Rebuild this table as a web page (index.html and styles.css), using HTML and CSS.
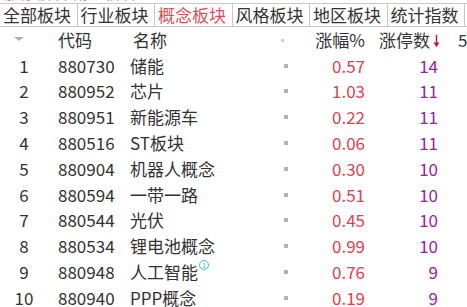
FILE: index.html
```html
<!DOCTYPE html>
<html>
<head>
<meta charset="utf-8">
<link rel="stylesheet" href="styles.css">
</head>
<body>
<div class="strip"><span class="strip-text">涨停板块 概念板块</span></div>
<div class="tabs">
  <div class="tab">全部板块</div>
  <div class="tab">行业板块</div>
  <div class="tab active">概念板块</div>
  <div class="tab">风格板块</div>
  <div class="tab">地区板块</div>
  <div class="tab">统计指数</div>
</div>
<div class="grid">
  <div class="c idx hdr"><span class="tri"></span></div>
  <div class="c code hdr">代码</div>
  <div class="c name hdr hname">名称</div>
  <div class="c dot hdr"><span class="sq small"></span></div>
  <div class="c pct hdr hpct">涨幅%</div>
  <div class="c cnt hdr hcnt">涨停数<svg class="arrow" width="7" height="14" viewBox="0 0 7 14"><path d="M3.5 1 V12" stroke="#d0102a" stroke-width="1.4"/><path d="M0.5 8.5 L3.5 13 L6.5 8.5 Z" fill="#d0102a"/></svg></div>
  <div class="c extra hdr">5</div>

  <div class="c idx">1</div><div class="c code">880730</div><div class="c name">储能</div><div class="c dot"><span class="sq"></span></div><div class="c pct">0.57</div><div class="c cnt">14</div><div class="c extra"></div>
  <div class="c idx">2</div><div class="c code">880952</div><div class="c name">芯片</div><div class="c dot"><span class="sq"></span></div><div class="c pct">1.03</div><div class="c cnt">11</div><div class="c extra"></div>
  <div class="c idx">3</div><div class="c code">880951</div><div class="c name">新能源车</div><div class="c dot"><span class="sq"></span></div><div class="c pct">0.22</div><div class="c cnt">11</div><div class="c extra"></div>
  <div class="c idx">4</div><div class="c code">880516</div><div class="c name">ST板块</div><div class="c dot"><span class="sq"></span></div><div class="c pct">0.06</div><div class="c cnt">11</div><div class="c extra"></div>
  <div class="c idx">5</div><div class="c code">880904</div><div class="c name">机器人概念</div><div class="c dot"><span class="sq"></span></div><div class="c pct">0.30</div><div class="c cnt">10</div><div class="c extra"></div>
  <div class="c idx">6</div><div class="c code">880594</div><div class="c name">一带一路</div><div class="c dot"><span class="sq"></span></div><div class="c pct">0.51</div><div class="c cnt">10</div><div class="c extra"></div>
  <div class="c idx">7</div><div class="c code">880544</div><div class="c name">光伏</div><div class="c dot"><span class="sq"></span></div><div class="c pct">0.45</div><div class="c cnt">10</div><div class="c extra"></div>
  <div class="c idx">8</div><div class="c code">880534</div><div class="c name">锂电池概念</div><div class="c dot"><span class="sq"></span></div><div class="c pct">0.99</div><div class="c cnt">10</div><div class="c extra"></div>
  <div class="c idx">9</div><div class="c code">880948</div><div class="c name">人工智能<span class="info">1</span></div><div class="c dot"><span class="sq"></span></div><div class="c pct">0.76</div><div class="c cnt">9</div><div class="c extra"></div>
  <div class="c idx">10</div><div class="c code">880940</div><div class="c name">PPP概念</div><div class="c dot"><span class="sq"></span></div><div class="c pct">0.19</div><div class="c cnt">9</div><div class="c extra"></div>
</div>
</body>
</html>
```
FILE: styles.css
```css
html, body {
  margin: 0;
  padding: 0;
  background: #ffffff;
  width: 467px;
  height: 307px;
  overflow: hidden;
  font-family: "Noto Sans CJK SC", "Noto Sans", sans-serif;
  color: #333333;
}
.strip {
  height: 3px;
  overflow: hidden;
  display: flow-root;
}
.strip-text {
  display: block;
  margin-top: -16px;
  margin-left: 4px;
  font-size: 15px;
  line-height: 17px;
  color: #e08088;
  letter-spacing: 1px;
}
.tabs {
  display: flex;
  height: 22px;
  border-top: 1px solid #c8c8c8;
  border-bottom: 1px solid #c8c8c8;
}
.tab {
  flex: none;
  border-right: 1px solid #c8c8c8;
  font-size: 17px;
  line-height: 22px;
  padding-left: 3px;
  box-sizing: border-box;
  width: 77.5px;
  color: #333;
  white-space: nowrap;
}
.tab.active {
  color: #e0505a;
}
.grid {
  display: grid;
  grid-template-columns: 48px 82px 150px 12px 73px 75px 1fr;
  grid-auto-rows: 25.8px;
  font-size: 17px;
}
.c {
  display: flex;
  align-items: center;
  line-height: 20px;
  white-space: nowrap;
}
.hdr {
  height: 26px;
}
.idx {
  justify-content: center;
}
.code {
  padding-left: 10px;
}
.name {
  position: relative;
}
.hname {
  padding-left: 3px;
}
.dot {
  justify-content: center;
}
.sq {
  display: block;
  width: 4px;
  height: 4px;
  background: #b4b4b4;
}
.sq.small {
  width: 3px;
  height: 3px;
  background: #cfcfcf;
  margin-left: -8px;
  margin-top: 1px;
}
.pct {
  justify-content: flex-end;
  color: #e3404e;
}
.hpct {
  color: #333;
}
.cnt {
  justify-content: flex-end;
  padding-right: 2px;
  color: #9a20a8;
}
.hcnt {
  color: #333;
  padding-right: 0;
}
.arrow {
  margin-left: 3px;
  margin-top: 2px;
}
.extra {
  padding-left: 18px;
}
.tri {
  display: block;
  width: 0;
  height: 0;
  border-left: 5px solid transparent;
  border-right: 5px solid transparent;
  border-top: 4px solid #b0b0b0;
  margin-left: -10px;
  margin-top: -3px;
}
.info {
  position: absolute;
  left: 69px;
  top: 1px;
  width: 8px;
  height: 8px;
  border: 1px solid #30c8d8;
  border-radius: 50%;
  color: #30c8d8;
  font-size: 7px;
  line-height: 8px;
  text-align: center;
}
```
